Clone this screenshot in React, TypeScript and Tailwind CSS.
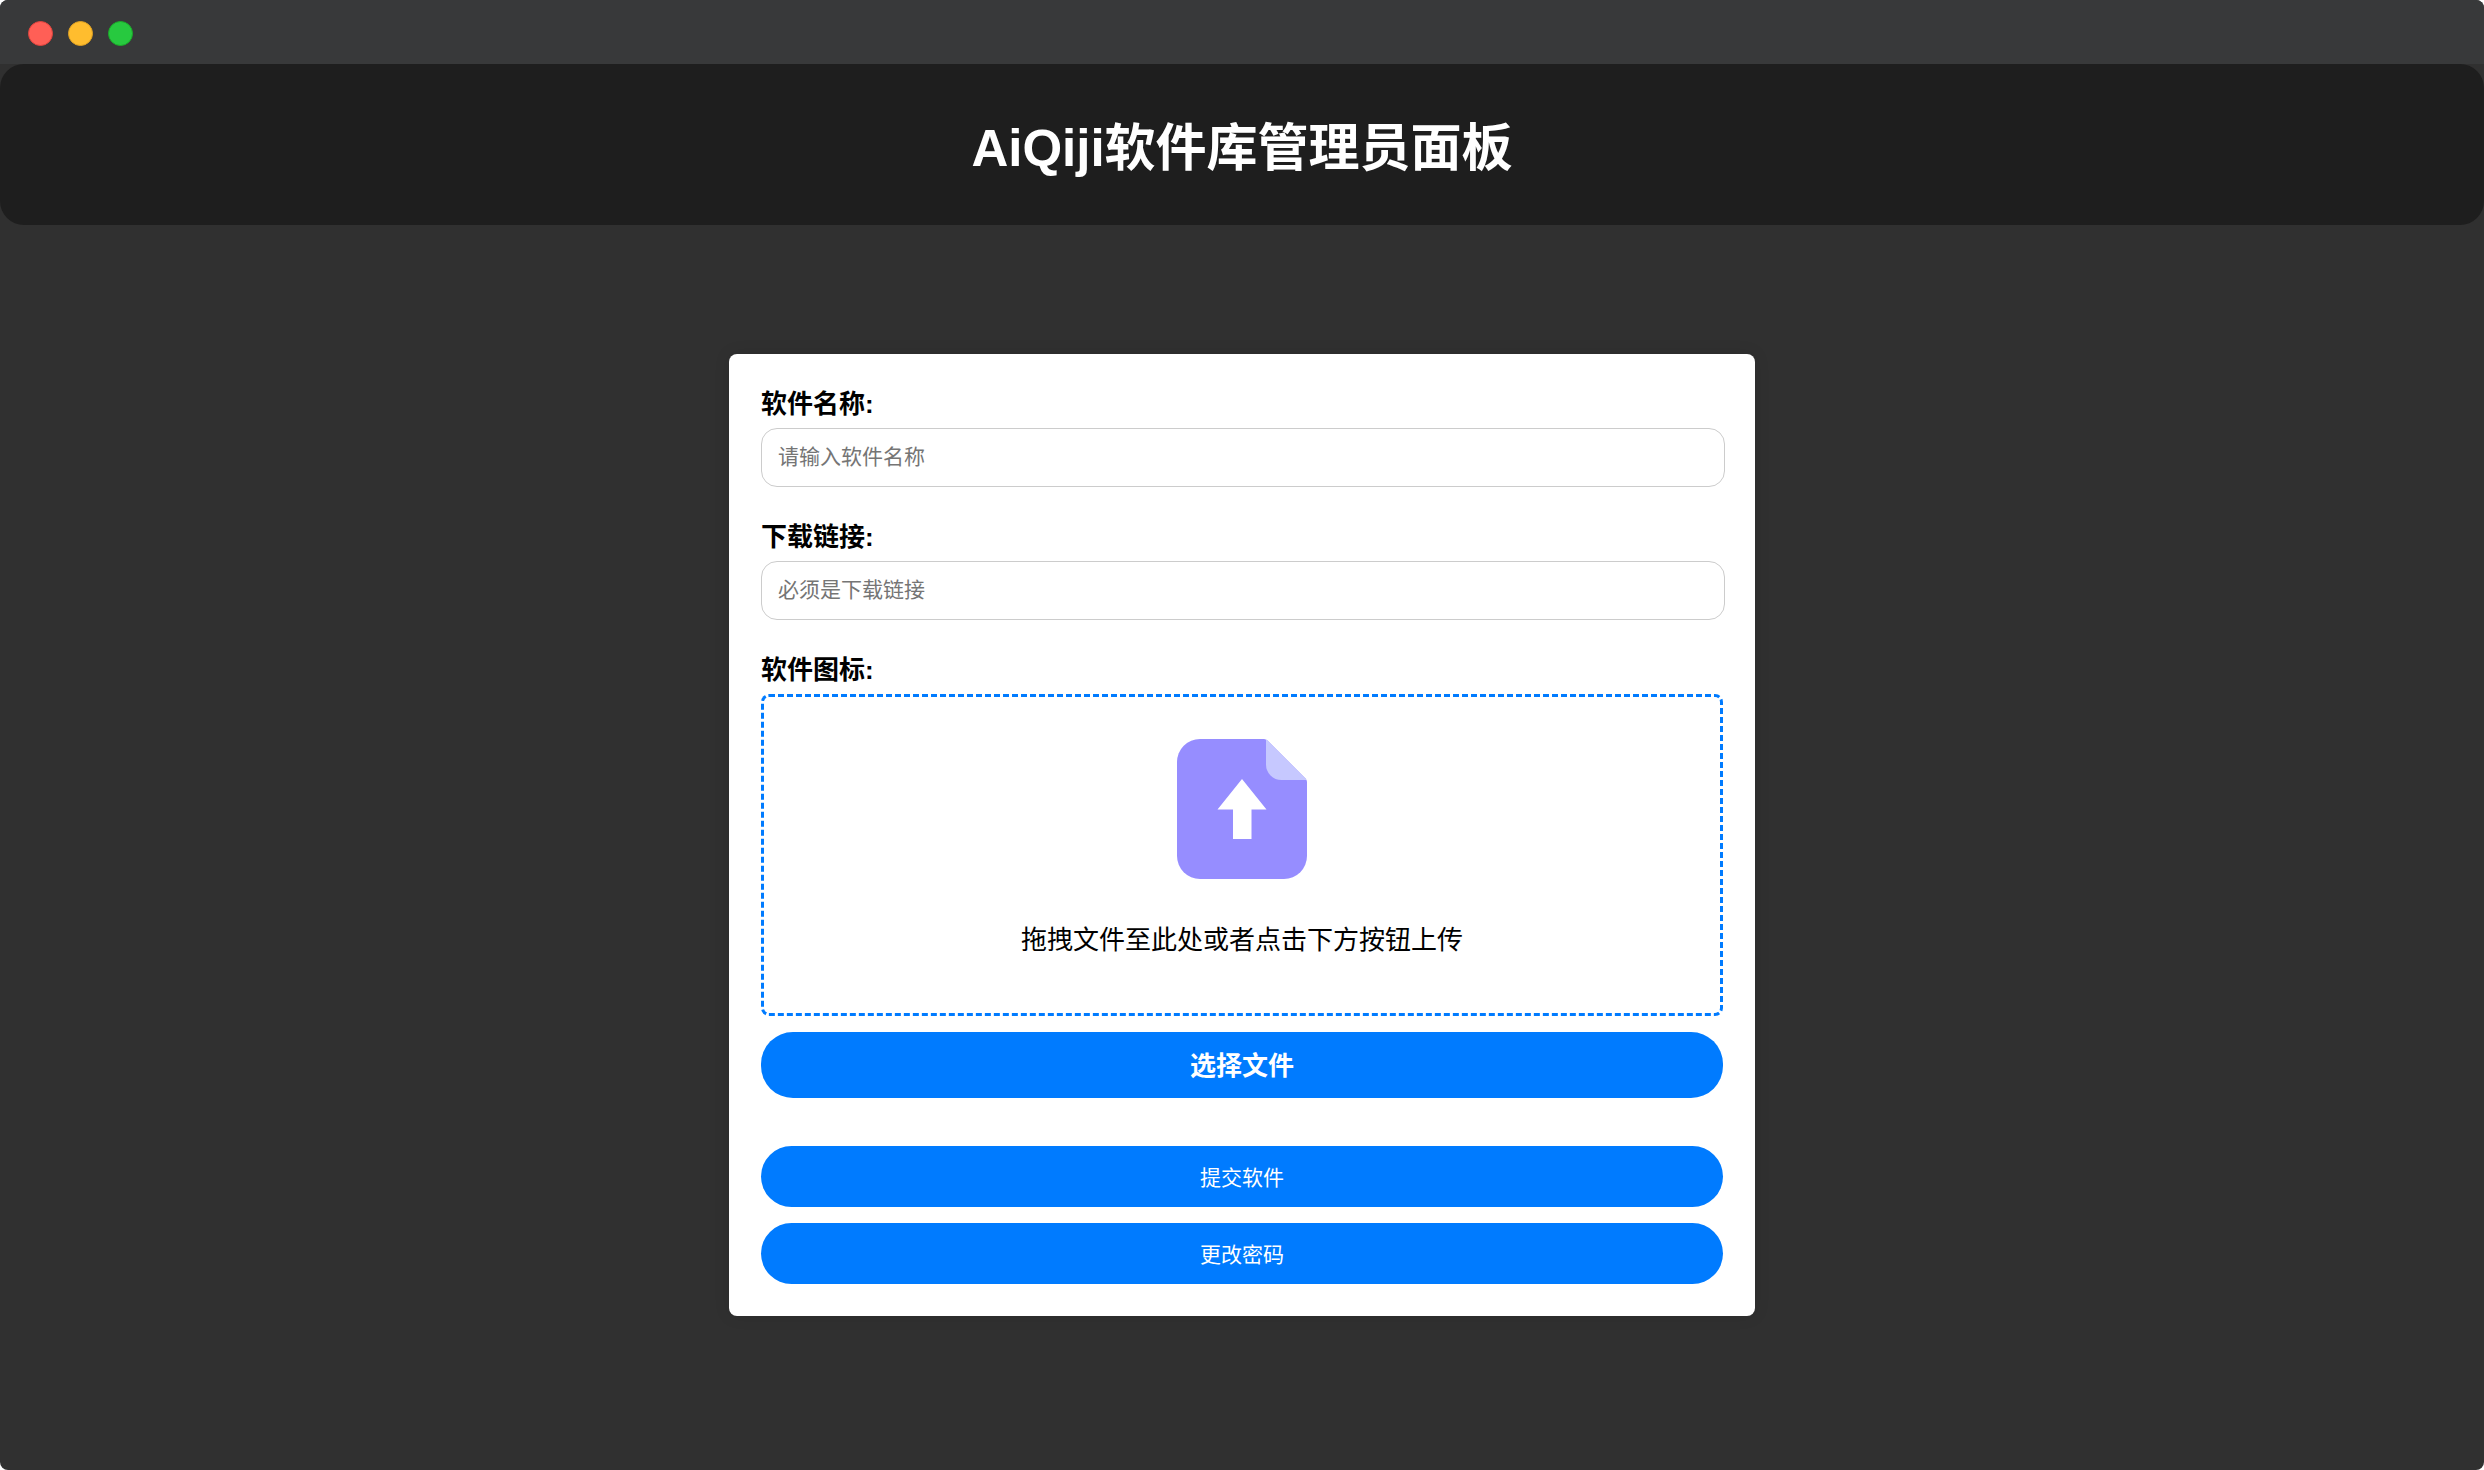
import { useRef } from "react";

function TitleBar() {
  return (
    <div className="flex h-16 items-center gap-[15px] bg-[#38393a] px-7 pt-[3px]">
      <span className="size-[25px] rounded-full border border-[#e0443e] bg-[#ff5f56]" />
      <span className="size-[25px] rounded-full border border-[#dea123] bg-[#ffbd2e]" />
      <span className="size-[25px] rounded-full border border-[#1aab29] bg-[#27c93f]" />
    </div>
  );
}

function UploadIcon() {
  return (
    <svg viewBox="0 0 130 140" className="h-[140px] w-[130px]" aria-hidden="true">
      <path
        d="M23 0H87Q89 0 90.500 1.500L128.500 39.500Q130 41 130 43V117A23 23 0 0 1 107 140H23A23 23 0 0 1 0 117V23A23 23 0 0 1 23 0Z"
        fill="#968dff"
      />
      <path d="M89 0.500Q90 1 90.500 1.500L128.500 39.500L129.500 41H104.500A15.500 15.500 0 0 1 89 25.500Z" fill="#c6c8ff" />
      <path d="M65 40L89.500 70.500H74.500V100H56V70.500H40.500Z" fill="#fff" />
    </svg>
  );
}

function TextField({ id, label, placeholder }: { id: string; label: string; placeholder: string }) {
  return (
    <div className="mb-8">
      <label htmlFor={id} className="mb-1.5 block text-[26px] leading-9 font-bold">
        {label}
      </label>
      <input
        id={id}
        type="text"
        placeholder={placeholder}
        className="block h-[59px] w-[calc(100%+2px)] rounded-2xl border border-[#ccc] bg-white px-4 pb-0.5 text-[21px] placeholder:text-[#757575]"
      />
    </div>
  );
}

export default function App() {
  const fileInput = useRef<HTMLInputElement>(null);

  return (
    <div className="bg-white font-['Liberation_Sans','Noto_Sans_CJK_SC',sans-serif] text-black">
      <div className="flex min-h-screen flex-col overflow-hidden rounded-lg bg-[#303030]">
        <TitleBar />
        <header className="rounded-3xl bg-[#1e1e1e] px-8 pt-13 pb-11 text-center text-white">
          <h1 className="text-[51px] leading-[65px] font-bold">AiQiji软件库管理员面板</h1>
        </header>
        <main className="flex grow justify-center px-4 pt-[129px] pb-16">
          <form
            className="w-full max-w-[1026px] self-start rounded-lg bg-white p-8 shadow-[0_0_16px_rgba(0,0,0,0.1)]"
            onSubmit={(e) => e.preventDefault()}
          >
            <TextField id="name" label="软件名称:" placeholder="请输入软件名称" />
            <TextField id="link" label="下载链接:" placeholder="必须是下载链接" />
            <label htmlFor="icon" className="mb-1.5 block text-[26px] leading-9 font-bold">
              软件图标:
            </label>
            <div className="flex h-[322px] flex-col items-center rounded-lg border-3 border-dashed border-[#007bff] pt-[42px]">
              <UploadIcon />
              <p className="mt-11 text-[26px] leading-[34px]">拖拽文件至此处或者点击下方按钮上传</p>
            </div>
            <input ref={fileInput} id="icon" type="file" accept="image/*" className="hidden" />
            <button
              type="button"
              onClick={() => fileInput.current?.click()}
              className="mt-4 block h-[66px] w-full rounded-[32px] bg-[#007bff] pt-0.5 text-[26px] leading-9 font-bold text-white"
            >
              选择文件
            </button>
            <button
              type="submit"
              className="mt-12 block h-[61px] w-full rounded-[32px] bg-[#007bff] pt-0.5 text-[21px] text-white"
            >
              提交软件
            </button>
            <button
              type="button"
              className="mt-4 block h-[61px] w-full rounded-[32px] bg-[#007bff] pt-0.5 text-[21px] text-white"
            >
              更改密码
            </button>
          </form>
        </main>
      </div>
    </div>
  );
}
